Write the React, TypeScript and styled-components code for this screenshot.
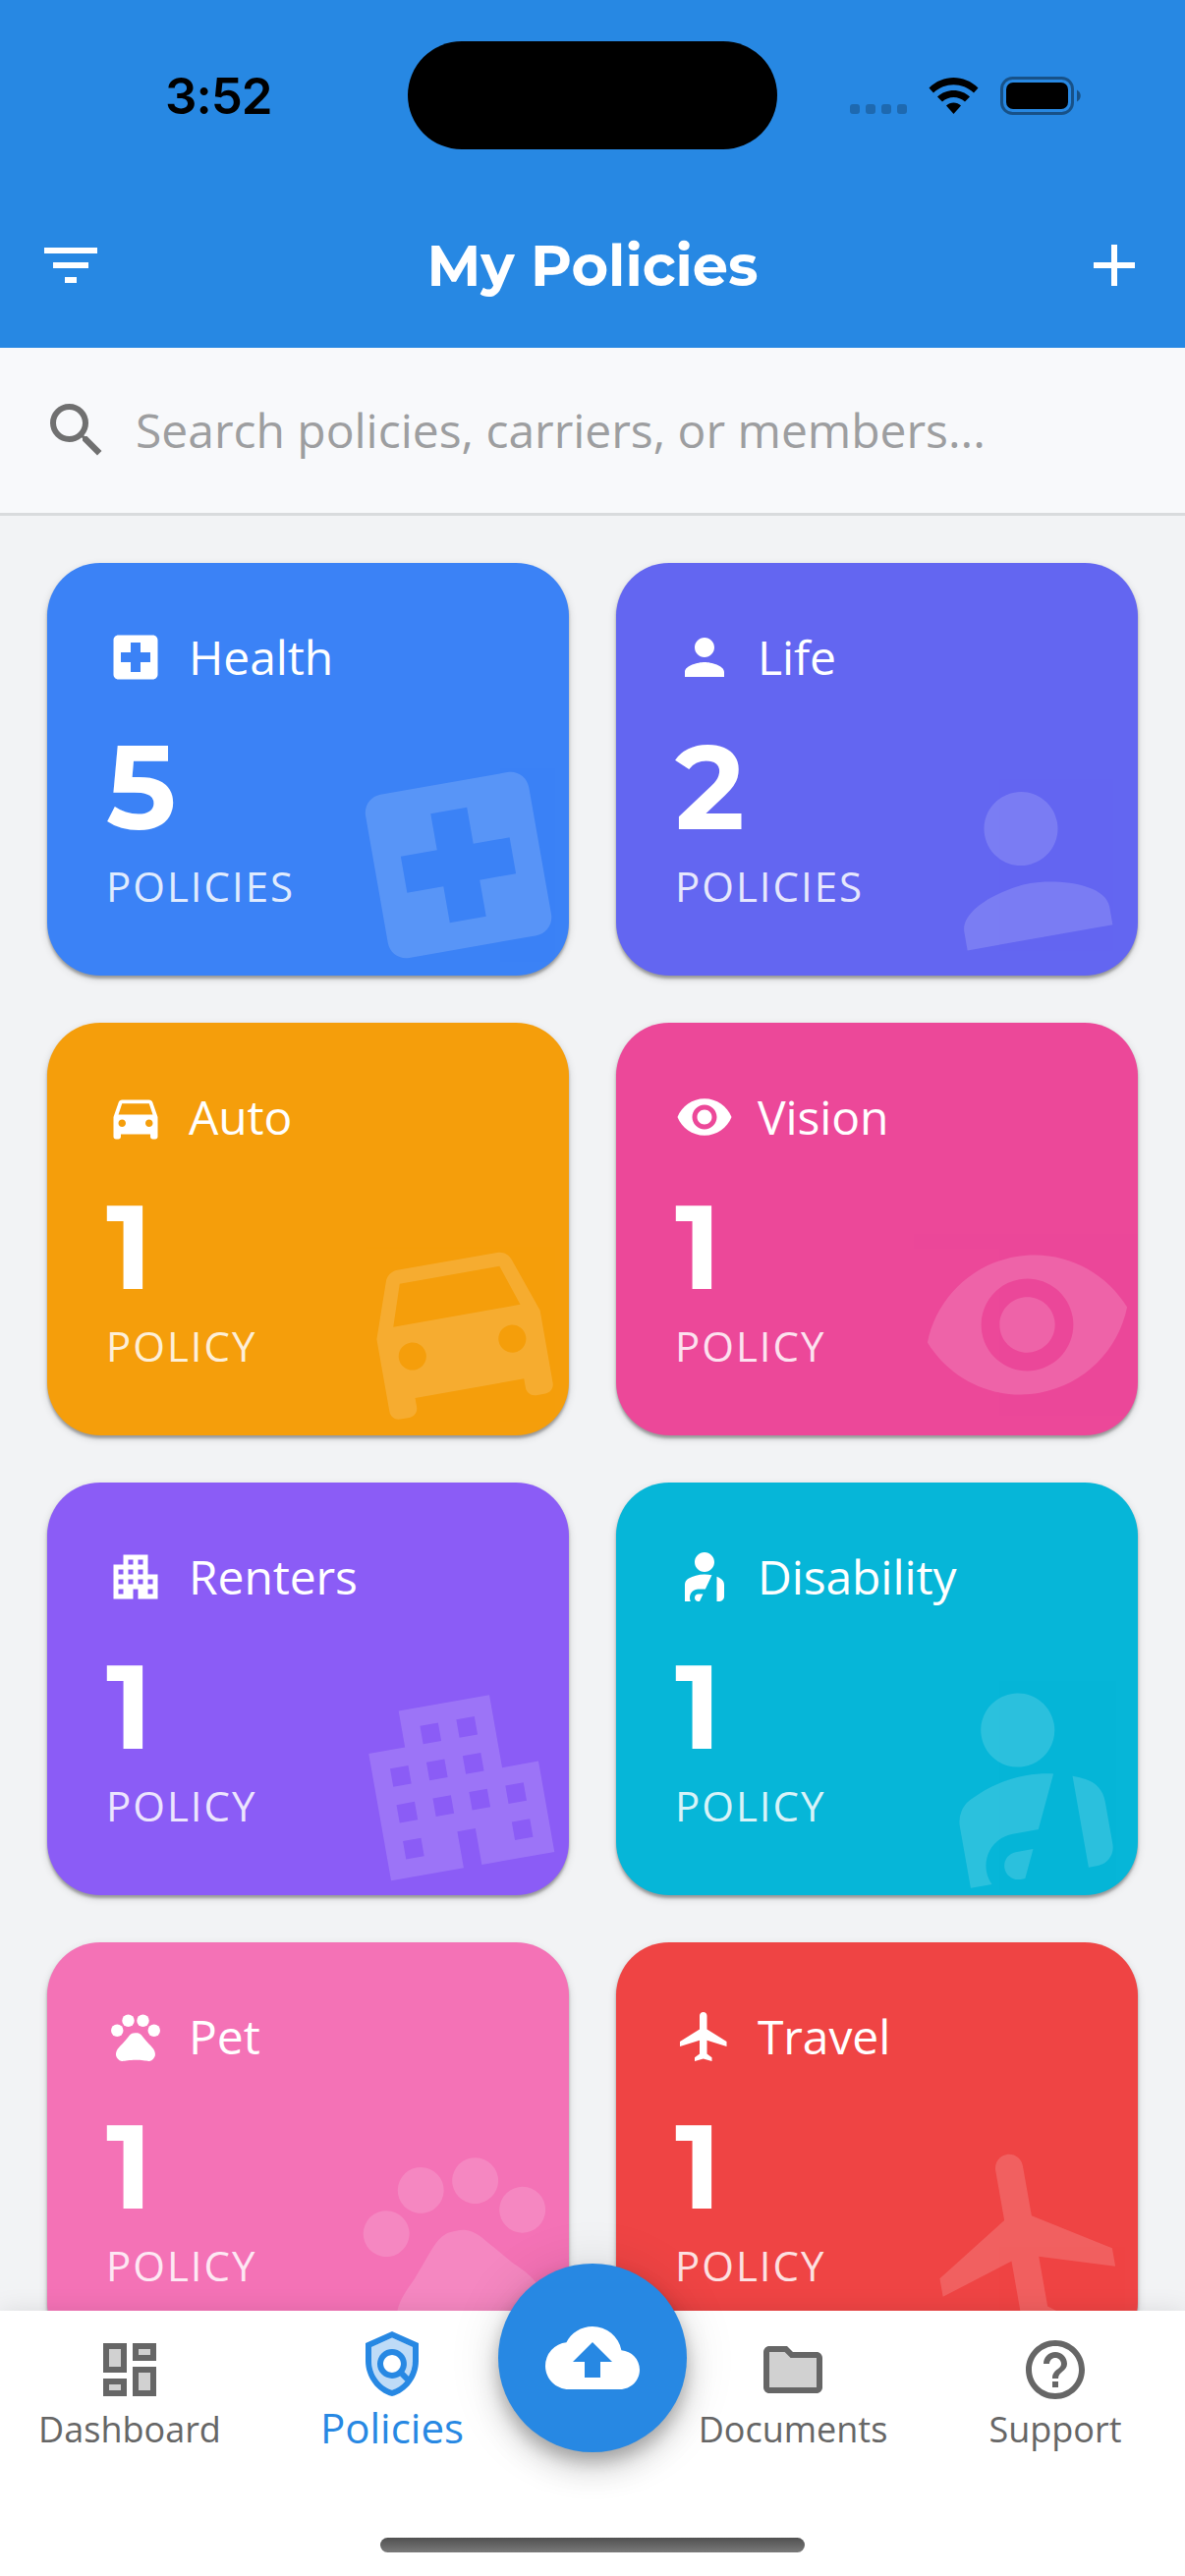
import React from "react";
import styled, { createGlobalStyle } from "styled-components";
import type { IconType } from "react-icons";
import {
  MdAdd,
  MdApartment,
  MdBackup,
  MdDirectionsCar,
  MdFilterList,
  MdFlight,
  MdHelpOutline,
  MdLocalHospital,
  MdPerson,
  MdPersonalInjury,
  MdPets,
  MdSearch,
  MdVisibility,
} from "react-icons/md";

const body = `"Open Sans", "Noto Sans", sans-serif`;
const display = `Montserrat, Inter, "Open Sans", sans-serif`;

const GlobalStyle = createGlobalStyle`
  * { box-sizing: border-box; }
  body { margin: 0; font-family: ${body}; }
  svg { display: block; flex: none; }
`;

const Screen = styled.div`
  display: flex;
  flex-direction: column;
  width: 1206px;
  height: 2622px;
  overflow: hidden;
  background: #f2f3f5;
`;

const Header = styled.header`
  flex: none;
  height: 354px;
  background: #2788e3;
`;

const StatusBar = styled.div`
  display: grid;
  grid-template-columns: 415px 376px 1fr;
  height: 186px;
  padding-top: 42px;
`;

const Clock = styled.div`
  padding: 28px 0 0 168px;
  font: 600 51px/56px Inter, sans-serif;
  letter-spacing: -1px;
  color: #000;
`;

const Island = styled.div`
  height: 110px;
  border-radius: 55px;
  background: #000;
`;

const StatusIcons = styled.div`
  display: flex;
  padding: 35px 0 0 73px;
`;

const Toolbar = styled.div`
  display: grid;
  grid-template-columns: 72px 1fr 72px;
  align-items: center;
  height: 168px;
  padding: 0 36px;
  color: #fff;
`;

const Title = styled.h1`
  margin: 0;
  font: 700 57.500px/72px ${display};
  text-align: center;
`;

const SearchBar = styled.div`
  flex: none;
  display: flex;
  align-items: center;
  gap: 24px;
  height: 171px;
  padding: 0 42px 1px;
  border-bottom: 3px solid #d9dbdd;
  background: #f8f9fb;
  color: #707070;
`;

const Placeholder = styled.span`
  font-size: 48px;
  line-height: 72px;
  letter-spacing: -0.02px;
  color: #9d9ea0;
`;

const Grid = styled.main`
  flex: 1;
  min-height: 0;
  overflow: hidden;
  display: grid;
  grid-template-columns: 1fr 1fr;
  grid-auto-rows: 420px;
  gap: 48px;
  padding: 48px;
`;

const Card = styled.article<{ $color: string }>`
  position: relative;
  overflow: hidden;
  padding: 60px;
  border-radius: 54px;
  background: ${(p) => p.$color};
  box-shadow: 0 3px 3px rgba(0, 0, 0, 0.3), 0 3px 9px rgba(0, 0, 0, 0.14);
  color: #fff;
`;

const CardHead = styled.div`
  display: flex;
  align-items: center;
  gap: 24px;
  height: 72px;
  font-size: 48px;
  line-height: 72px;
  letter-spacing: -0.1px;
`;

const Count = styled.div`
  margin-top: 24px;
  height: 143px;
  font: 700 120px/144px ${display};
`;

const Unit = styled.div`
  font-size: 42px;
  line-height: 60px;
  letter-spacing: 2px;
  color: rgba(255, 255, 255, 0.85);
`;

const Watermark = styled.div`
  position: absolute;
  right: 0;
  bottom: 0;
  opacity: 0.15;
  transform: rotate(-10deg);
`;

const NavBar = styled.nav`
  position: relative;
  flex: none;
  display: grid;
  grid-template-columns: 264px 270px 138px 270px 264px;
  height: 270px;
  background: #fff;
  box-shadow: 0 0 24px rgba(0, 0, 0, 0.1);
`;

const NavItem = styled.a<{ $active?: boolean }>`
  display: flex;
  flex-direction: column;
  align-items: center;
  padding-top: ${(p) => (p.$active ? 18 : 24)}px;
  font-size: ${(p) => (p.$active ? 42 : 36)}px;
  line-height: ${(p) => (p.$active ? 58 : 50)}px;
  color: ${(p) => (p.$active ? "#2788e3" : "#666")};
`;

const UploadButton = styled.button`
  position: absolute;
  left: 507px;
  top: -48px;
  display: grid;
  place-items: center;
  width: 192px;
  height: 192px;
  padding: 0;
  border: 0;
  border-radius: 50%;
  background: #2788e3;
  color: #fff;
  box-shadow: 0 9px 15px rgba(0, 0, 0, 0.2), 0 18px 30px rgba(0, 0, 0, 0.14), 0 3px 54px rgba(0, 0, 0, 0.12);
`;

const HomeIndicator = styled.div`
  position: absolute;
  left: 387px;
  bottom: 24px;
  width: 432px;
  height: 15px;
  border-radius: 8px;
  background: linear-gradient(#505050, #7a7a7a);
`;

const policies: { name: string; count: number; color: string; Icon: IconType }[] = [
  { name: "Health", count: 5, color: "#3b82f6", Icon: MdLocalHospital },
  { name: "Life", count: 2, color: "#6366f1", Icon: MdPerson },
  { name: "Auto", count: 1, color: "#f59e0b", Icon: MdDirectionsCar },
  { name: "Vision", count: 1, color: "#ec4899", Icon: MdVisibility },
  { name: "Renters", count: 1, color: "#8b5cf6", Icon: MdApartment },
  { name: "Disability", count: 1, color: "#06b6d8", Icon: MdPersonalInjury },
  { name: "Pet", count: 1, color: "#f472b6", Icon: MdPets },
  { name: "Travel", count: 1, color: "#ef4444", Icon: MdFlight },
];

/* Two-tone icons: a translucent fill beneath a solid outline. */
function TwoTone({ fill, line }: { fill: string; line: string }) {
  return (
    <svg width="72" height="72" viewBox="0 0 24 24" fill="currentColor">
      <path d={fill} opacity="0.3" fillRule="evenodd" />
      <path d={line} />
    </svg>
  );
}

const dashboard = {
  fill: "M5 5h4v6H5zM15 13h4v6h-4zM5 17h4v2H5zM15 5h4v2h-4z",
  line: "M3 13h8V3H3v10zm2-8h4v6H5V5zm8 16h8V11h-8v10zm2-8h4v6h-4v-6zM13 3v6h8V3h-8zm6 4h-4V5h4v2zM3 21h8v-6H3v6zm2-4h4v2H5v-2z",
};

const policy = {
  fill: "M12 3.190 5 6.300V11c0 4.520 2.980 8.690 7 9.940 4.020-1.250 7-5.420 7-9.940V6.300zM12 9a3 3 0 1 1 0 6 3 3 0 0 1 0-6z",
  line: "M12 1 3 5v6c0 5.550 3.840 10.740 9 12 5.160-1.260 9-6.450 9-12V5l-9-4zm7 10c0 1.850-.51 3.650-1.380 5.210l-1.450-1.450c1.290-1.940 1.070-4.580-.64-6.290-1.950-1.950-5.120-1.950-7.070 0s-1.950 5.120 0 7.070c1.710 1.710 4.350 1.920 6.290.64l1.720 1.720c-1.190 1.420-2.730 2.510-4.470 3.040-4.020-1.250-7-5.420-7-9.940V6.300l7-3.110 7 3.110V11zm-7 4c-1.660 0-3-1.340-3-3s1.340-3 3-3 3 1.340 3 3-1.340 3-3 3z",
};

const folder = {
  fill: "M11.170 8 9.170 6H4v12h16V8z",
  line: "M20 6h-8l-2-2H4c-1.100 0-1.990.9-1.990 2L2 18c0 1.100.9 2 2 2h16c1.100 0 2-.9 2-2V8c0-1.100-.9-2-2-2zm0 12H4V6h5.170l2 2H20v10z",
};

function StatusGlyphs() {
  return (
    <svg width="240" height="44" viewBox="0 0 240 44">
      <g fill="#000" opacity="0.22">
        <rect x="1" y="29" width="10" height="10" rx="3" />
        <rect x="17" y="29" width="10" height="10" rx="3" />
        <rect x="33" y="29" width="10" height="10" rx="3" />
        <rect x="49" y="29" width="10" height="10" rx="3" />
      </g>
      <path d="M81.500 12.500C95.500-1.500 117.500-1.500 131.500 12.500L127 17.500C115.500 6.500 97.500 6.500 86 17.500Z" />
      <path d="M90 21.500C99 12.700 114 12.700 123 21.500L118 26.500C111.500 20.500 101.500 20.500 95 26.500Z" />
      <path d="M99 30.500C103 26.500 110 26.500 114 30.500L106.500 39Z" />
      <rect x="155.500" y="2.500" width="72" height="36" rx="11" fill="none" stroke="#000" strokeWidth="3" opacity="0.4" />
      <rect x="160" y="7" width="63" height="27" rx="7" />
      <path d="M232 14.500C237 17 237 24 232 26.500Z" opacity="0.4" />
    </svg>
  );
}

export default function App() {
  return (
    <Screen>
      <GlobalStyle />
      <Header>
        <StatusBar>
          <Clock>3:52</Clock>
          <Island />
          <StatusIcons>
            <StatusGlyphs />
          </StatusIcons>
        </StatusBar>
        <Toolbar>
          <MdFilterList size={72} />
          <Title>My Policies</Title>
          <MdAdd size={72} />
        </Toolbar>
      </Header>
      <SearchBar>
        <MdSearch size={72} />
        <Placeholder>Search policies, carriers, or members...</Placeholder>
      </SearchBar>
      <Grid>
        {policies.map(({ name, count, color, Icon }) => (
          <Card key={name} $color={color}>
            <Watermark>
              <Icon size={225} />
            </Watermark>
            <CardHead>
              <Icon size={60} />
              {name}
            </CardHead>
            <Count>{count}</Count>
            <Unit>{count === 1 ? "POLICY" : "POLICIES"}</Unit>
          </Card>
        ))}
      </Grid>
      <NavBar>
        <NavItem>
          <TwoTone {...dashboard} />
          Dashboard
        </NavItem>
        <NavItem $active>
          <TwoTone {...policy} />
          Policies
        </NavItem>
        <span />
        <NavItem>
          <TwoTone {...folder} />
          Documents
        </NavItem>
        <NavItem>
          <MdHelpOutline size={72} />
          Support
        </NavItem>
        <UploadButton>
          <MdBackup size={96} />
        </UploadButton>
        <HomeIndicator />
      </NavBar>
    </Screen>
  );
}
